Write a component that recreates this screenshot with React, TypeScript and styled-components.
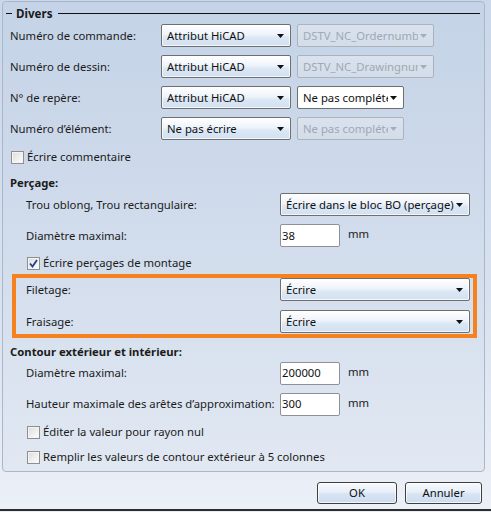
import React from 'react';
import styled, { createGlobalStyle } from 'styled-components';

const GlobalStyle = createGlobalStyle`
  html, body { margin: 0; padding: 0; }
  body {
    background: #e9eef6;
    font-family: "Noto Sans", "Segoe UI", sans-serif;
    font-size: 11.3px;
    color: #1b1b1b;
  }
`;

const Window = styled.div`
  width: 491px;
  height: 511px;
  box-sizing: border-box;
  padding: 1px 6px 0 2px;
  display: flex;
  flex-direction: column;
  background: linear-gradient(to bottom, #cad7ea 0%, #d9e2ef 60%, #ecf0f7 100%);
  border-bottom: 2px solid #2e2e2e;
`;

const Panel = styled.div`
  width: 483px;
  height: 471px;
  box-sizing: border-box;
  border: 1px solid #a9b7ca;
  border-radius: 4px;
  background: linear-gradient(to bottom, #c4d3e7 0%, #d1dcec 50%, #e1e8f2 100%);
  display: flex;
  flex-direction: column;
`;

const Legend = styled.div`
  display: flex;
  align-items: center;
  height: 15px;
  margin: 4px 4px 0 3px;
  gap: 4px;
`;

const Dash = styled.span`
  width: 6px;
  height: 1px;
  background: #111;
`;

const LegendText = styled.span`
  font-weight: 700;
  font-size: 11.6px;
  line-height: 15px;
`;

const Rule = styled.span`
  flex: 1;
  height: 1px;
  background: #111;
  margin-left: 1px;
`;

const Row = styled.div<{ $mt: number; $indent: number; $h?: number }>`
  display: flex;
  align-items: center;
  height: ${p => p.$h ?? 23}px;
  margin-top: ${p => p.$mt}px;
  padding-left: ${p => p.$indent}px;
  line-height: 16px;
`;

const Label = styled.span<{ $w: number }>`
  width: ${p => p.$w}px;
  flex: none;
  white-space: nowrap;
`;

const Heading = styled.div<{ $mt: number }>`
  height: 16px;
  line-height: 16px;
  margin-top: ${p => p.$mt}px;
  padding-left: 7px;
  font-weight: 700;
`;

type ComboKind = 'normal' | 'white' | 'disabled';

const ComboBox = styled.div<{ $w: number; $kind: ComboKind; $ml?: number }>`
  width: ${p => p.$w}px;
  height: 23px;
  margin-left: ${p => p.$ml ?? 0}px;
  box-sizing: border-box;
  flex: none;
  display: flex;
  align-items: center;
  padding: 0 5px 0 5px;
  border-radius: 2px;
  border: 1px solid ${p => (p.$kind === 'disabled' ? '#adb3b9' : '#6f6f6f')};
  color: ${p => (p.$kind === 'disabled' ? '#a1a8b1' : '#111')};
  background: ${p =>
    p.$kind === 'white'
      ? '#ffffff'
      : p.$kind === 'disabled'
      ? 'linear-gradient(to bottom, #d9e2ee, #d3ddea)'
      : 'linear-gradient(to bottom, #ffffff 0%, #eef4fb 45%, #dbe7f5 60%, #d2e0f1 100%)'};
  box-shadow: ${p => (p.$kind === 'normal' ? 'inset 0 0 0 1px rgba(255,255,255,0.7)' : 'none')};
`;

const ComboValue = styled.span`
  flex: 1;
  overflow: hidden;
  white-space: nowrap;
  line-height: 16px;
`;

const Arrow = styled.svg`
  flex: none;
  margin-left: 2px;
  margin-right: 1px;
`;

const Combo: React.FC<{ w: number; kind?: ComboKind; value: string; ml?: number }> = ({
  w,
  kind = 'normal',
  value,
  ml,
}) => (
  <ComboBox $w={w} $kind={kind} $ml={ml}>
    <ComboValue>{value}</ComboValue>
    <Arrow width="7" height="4" viewBox="0 0 7 4">
      <path d="M0 0 H7 L3.5 4 Z" fill={kind === 'disabled' ? '#a6adb6' : '#111'} />
    </Arrow>
  </ComboBox>
);

const Input = styled.div`
  width: 60px;
  height: 23px;
  box-sizing: border-box;
  flex: none;
  background: #fff;
  border: 1px solid #8e9298;
  border-radius: 2px;
  padding: 0 1px;
  display: flex;
  align-items: center;
  line-height: 16px;
  color: #111;
`;

const Unit = styled.span`
  margin-left: 8px;
  align-self: flex-start;
  margin-top: 2px;
`;

const CheckRow = styled.label<{ $mt: number; $indent: number }>`
  display: flex;
  align-items: center;
  gap: 3px;
  height: 16px;
  line-height: 16px;
  margin-top: ${p => p.$mt}px;
  padding-left: ${p => p.$indent}px;
`;

const Box = styled.span`
  width: 13px;
  height: 13px;
  box-sizing: border-box;
  border: 1px solid #8e8f8f;
  background: linear-gradient(135deg, #dcdcdc 0%, #f4f4f4 70%, #ffffff 100%);
  box-shadow: inset 0 0 0 1px #f4f4f4;
  display: flex;
  align-items: center;
  justify-content: center;
  flex: none;
`;

const Check: React.FC<{ checked?: boolean; label: string; mt: number; indent: number }> = ({
  checked,
  label,
  mt,
  indent,
}) => (
  <CheckRow $mt={mt} $indent={indent}>
    <Box>
      {checked && (
        <svg width="9" height="9" viewBox="0 0 9 9">
          <path d="M1 4.5 L3.5 7.5 L8 1" fill="none" stroke="#21418d" strokeWidth="1.8" />
        </svg>
      )}
    </Box>
    <span>{label}</span>
  </CheckRow>
);

const Highlight = styled.div`
  margin: 3px 7px 0 9px;
  height: 64px;
  box-sizing: border-box;
  border: 4px solid #f5811f;
  display: flex;
  flex-direction: column;
`;

const Footer = styled.div`
  display: flex;
  justify-content: flex-end;
  gap: 8px;
  margin-top: 10px;
  padding-right: 3px;
`;

const Button = styled.button<{ $w: number }>`
  width: ${p => p.$w}px;
  height: 22px;
  box-sizing: border-box;
  border: 1px solid #3f3f3f;
  border-radius: 3px;
  background: linear-gradient(to bottom, #f7fafd 0%, #e8eff8 45%, #d7e4f3 55%, #cddcef 100%);
  box-shadow: inset 0 0 0 1px rgba(255, 255, 255, 0.75);
  font-family: inherit;
  font-size: 11.3px;
  color: #111;
  padding: 0;
  line-height: 16px;
`;

export default function App() {
  return (
    <>
      <GlobalStyle />
      <Window>
        <Panel>
          <Legend>
            <Dash />
            <LegendText>Divers</LegendText>
            <Rule />
          </Legend>

          <Row $mt={3} $indent={7}>
            <Label $w={151}>Numéro de commande:</Label>
            <Combo w={130} value="Attribut HiCAD" />
            <Combo w={137} ml={6} kind="disabled" value="DSTV_NC_Ordernumber" />
          </Row>
          <Row $mt={8} $indent={7}>
            <Label $w={151}>Numéro de dessin:</Label>
            <Combo w={130} value="Attribut HiCAD" />
            <Combo w={137} ml={6} kind="disabled" value="DSTV_NC_Drawingnumber" />
          </Row>
          <Row $mt={8} $indent={7}>
            <Label $w={151}>N° de repère:</Label>
            <Combo w={130} value="Attribut HiCAD" />
            <Combo w={107} ml={6} kind="white" value="Ne pas compléter" />
          </Row>
          <Row $mt={8} $indent={7}>
            <Label $w={151}>Numéro d’élément:</Label>
            <Combo w={130} value="Ne pas écrire" />
            <Combo w={107} ml={6} kind="disabled" value="Ne pas compléter" />
          </Row>

          <Check mt={9} indent={8} label="Écrire commentaire" />

          <Heading $mt={10}>Perçage:</Heading>
          <Row $mt={2} $indent={23}>
            <Label $w={254}>Trou oblong, Trou rectangulaire:</Label>
            <Combo w={190} value="Écrire dans le bloc BO (perçage)" />
          </Row>
          <Row $mt={8} $indent={23}>
            <Label $w={254}>Diamètre maximal:</Label>
            <Input>38</Input>
            <Unit>mm</Unit>
          </Row>
          <Check mt={8} indent={24} checked label="Écrire perçages de montage" />

          <Highlight>
            <Row $mt={0} $indent={10}>
              <Label $w={254}>Filetage:</Label>
              <Combo w={190} value="Écrire" />
            </Row>
            <Row $mt={9} $indent={10}>
              <Label $w={254}>Fraisage:</Label>
              <Combo w={190} value="Écrire" />
            </Row>
          </Highlight>

          <Heading $mt={6}>Contour extérieur et intérieur:</Heading>
          <Row $mt={2} $indent={23} $h={22}>
            <Label $w={254}>Diamètre maximal:</Label>
            <Input>200000</Input>
            <Unit>mm</Unit>
          </Row>
          <Row $mt={9} $indent={23} $h={22}>
            <Label $w={254}>Hauteur maximale des arêtes d’approximation:</Label>
            <Input>300</Input>
            <Unit>mm</Unit>
          </Row>
          <Check mt={9} indent={24} label="Éditer la valeur pour rayon nul" />
          <Check mt={9} indent={24} label="Remplir les valeurs de contour extérieur à 5 colonnes" />
        </Panel>
        <Footer>
          <Button $w={80}>OK</Button>
          <Button $w={77}>Annuler</Button>
        </Footer>
      </Window>
    </>
  );
}
